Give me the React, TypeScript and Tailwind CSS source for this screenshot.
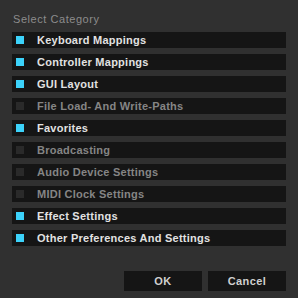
import React from "react";

const categories = [
  { label: "Keyboard Mappings", on: true },
  { label: "Controller Mappings", on: true },
  { label: "GUI Layout", on: true },
  { label: "File Load- And Write-Paths", on: false },
  { label: "Favorites", on: true },
  { label: "Broadcasting", on: false },
  { label: "Audio Device Settings", on: false },
  { label: "MIDI Clock Settings", on: false },
  { label: "Effect Settings", on: true },
  { label: "Other Preferences And Settings", on: true },
];

function App() {
  return (
    <div
      className="w-[298px] h-[298px] bg-[#303030] flex flex-col px-3 pt-[12px]"
      style={{ fontFamily: '"Liberation Sans", Arial, sans-serif' }}
    >
      <div className="h-[14px] pl-px text-[11px] leading-[14px] text-[#8c8c8c] tracking-[0.55px]">
        Select Category
      </div>

      <div className="mt-[6px] flex flex-col gap-[6px]">
        {categories.map((c) => (
          <div
            key={c.label}
            className="h-4 w-[274px] bg-[#151515] flex items-center pl-1"
          >
            <span
              className={
                c.on
                  ? "w-2 h-2 bg-[#3cd2fa]"
                  : "w-2 h-2 bg-[#2a2a2a]"
              }
            />
            <span
              className={
                c.on
                  ? "ml-[13px] text-[11px] font-bold tracking-[0.25px] text-[#e2e2e2]"
                  : "ml-[13px] text-[11px] font-bold tracking-[0.25px] text-[#858585]"
              }
            >
              {c.label}
            </span>
          </div>
        ))}
      </div>

      <div className="mt-[25px] flex justify-end gap-[6px] w-[274px]">
        <button className="w-[78px] h-5 bg-[#151515] text-[11px] font-bold tracking-[0.4px] text-[#d0d0d0]">
          OK
        </button>
        <button className="w-[78px] h-5 bg-[#151515] text-[11px] font-bold tracking-[0.4px] text-[#d0d0d0]">
          Cancel
        </button>
      </div>
    </div>
  );
}

export default App;
